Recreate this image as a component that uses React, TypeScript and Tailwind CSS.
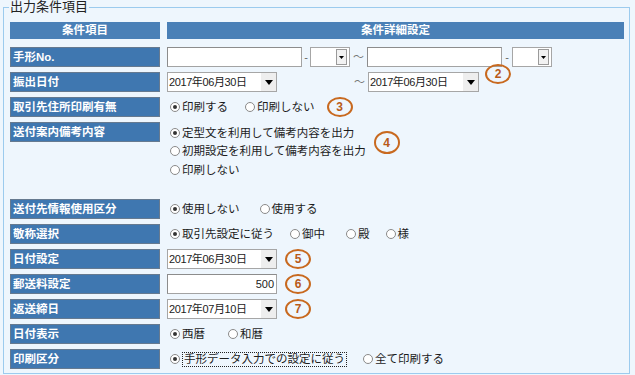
import React from "react";

const FONT = "font-['Liberation_Sans','Noto_Sans_CJK_JP',sans-serif]";

const Arrow = ({ small = false }: { small?: boolean }) =>
  small ? (
    <svg width="5" height="3" viewBox="0 0 5 3">
      <path d="M0 0H5L2.5 3z" fill="#000" />
    </svg>
  ) : (
    <svg width="8" height="5" viewBox="0 0 8 5">
      <path d="M0 0H8L4 5z" fill="#000" />
    </svg>
  );

const Label = ({ children }: { children: React.ReactNode }) => (
  <div className="w-[150px] h-[20px] shrink-0 self-start bg-[#3f77b0] border border-[#667a90] pl-[2px] text-white font-bold text-[11.5px] leading-[18px]">
    {children}
  </div>
);

const TextBox = ({ value = "", w }: { value?: string; w: string }) => (
  <div
    className={`${w} h-[20px] border border-[#a3a3a3] border-t-[#8c8c8c] border-l-[#8c8c8c] bg-white text-right pr-[2px] text-[11px] leading-[18px]`}
  >
    {value}
  </div>
);

const DateSelect = ({ value, w }: { value: string; w: string }) => (
  <div className={`${w} h-[20px] border border-[#a6a6a6] bg-white flex items-center`}>
    <span className="flex-1 pl-[1px] text-[11px] tracking-[-0.4px] leading-[18px]">{value}</span>
    <span className="w-[15px] h-full bg-[#eeeeee] flex items-center justify-center">
      <Arrow />
    </span>
  </div>
);

const SmallSelect = () => (
  <div className="w-[40px] h-[20px] border border-[#a6a6a6] bg-white flex items-center justify-end pr-[2px]">
    <span className="w-[11px] h-[16px] border border-[#9a9a9a] bg-[#f2f2f2] flex items-center justify-center">
      <Arrow small />
    </span>
  </div>
);

const Radio = ({
  label,
  checked = false,
  className = "",
  focus = false,
}: {
  label: string;
  checked?: boolean;
  className?: string;
  focus?: boolean;
}) => (
  <span className={`inline-flex items-center ${className}`}>
    <span className="w-[10px] h-[10px] rounded-full border border-[#8a8a8a] bg-white flex items-center justify-center">
      {checked && <span className="w-[4px] h-[4px] rounded-full bg-[#333]" />}
    </span>
    <span
      className={`ml-[2px] ${focus ? "border border-dotted border-[#222] px-[1px] leading-[13px]" : "leading-[16px]"}`}
    >
      {label}
    </span>
  </span>
);

const Mark = ({ n, className = "" }: { n: number; className?: string }) => (
  <span
    className={`w-[26px] h-[20px] shrink-0 rounded-[50%] border-2 border-[#c8691f] text-[#b85a18] font-bold text-[12px] leading-none flex items-center justify-center ${className}`}
  >
    {n}
  </span>
);

const Row = ({
  label,
  children,
  top = "mt-[5px]",
}: {
  label: string;
  children: React.ReactNode;
  top?: string;
}) => (
  <div className={`flex gap-[7px] ${top}`}>
    <Label>{label}</Label>
    <div className="flex-1 flex items-center h-[20px] text-[11.5px]">{children}</div>
  </div>
);

const Dash = ({ w }: { w: string }) => (
  <span className={`${w} text-center text-[#666] text-[11px]`}>-</span>
);

export default function App() {
  return (
    <div className={`w-[635px] h-[375px] bg-[#eef6fd] pl-[3px] text-[#1c1c1c] ${FONT}`}>
      <fieldset className="w-[627px] h-[374px] border border-[#9ccbee] pl-[6px] pr-[4px]">
        <legend className="-ml-[1px] px-[1px] text-[13px] leading-[14px] text-[#222]">出力条件項目</legend>

        {/* header */}
        <div className="flex gap-[7px] mt-[8px] text-white font-bold text-[11.5px] leading-[17px] text-center">
          <div className="w-[150px] h-[17px] bg-[#4a80b7]">条件項目</div>
          <div className="w-[457px] h-[17px] bg-[#4a80b7]">条件詳細設定</div>
        </div>

        <Row label="手形No." top="mt-[8px]">
          <TextBox w="w-[135px]" />
          <Dash w="w-[8px]" />
          <SmallSelect />
          <span className="w-[17px] pl-[3px] text-[#777] text-[11px]">～</span>
          <TextBox w="w-[135px]" />
          <Dash w="w-[10px]" />
          <SmallSelect />
        </Row>

        <Row label="振出日付">
          <DateSelect value="2017年06月30日" w="w-[110px]" />
          <span className="w-[91px] flex justify-end pr-[3px] text-[#777] text-[11px]">～</span>
          <DateSelect value="2017年06月30日" w="w-[111px]" />
          <Mark n={2} className="ml-[6px] self-start -mt-[8px]" />
        </Row>

        <Row label="取引先住所印刷有無">
          <span className="pl-[3px]" />
          <Radio label="印刷する" checked />
          <Radio label="印刷しない" className="ml-[17px]" />
          <Mark n={3} className="ml-[12px]" />
        </Row>

        <div className="flex gap-[7px] mt-[5px] h-[72px]">
          <Label>送付案内備考内容</Label>
          <div className="flex text-[11.5px]">
            <div className="flex flex-col pl-[3px] pt-[2px]">
              <div className="h-[18px] flex items-center">
                <Radio label="定型文を利用して備考内容を出力" checked />
              </div>
              <div className="h-[18px] flex items-center">
                <Radio label="初期設定を利用して備考内容を出力" />
              </div>
              <div className="h-[19px] flex items-center">
                <Radio label="印刷しない" />
              </div>
            </div>
            <Mark n={4} className="ml-[8px] mt-[9px] h-[23px]" />
          </div>
        </div>

        <Row label="送付先情報使用区分">
          <span className="pl-[3px]" />
          <Radio label="使用しない" checked />
          <Radio label="使用する" className="ml-[20px]" />
        </Row>

        <Row label="敬称選択">
          <span className="pl-[3px]" />
          <Radio label="取引先設定に従う" checked />
          <Radio label="御中" className="ml-[16px]" />
          <Radio label="殿" className="ml-[21px]" />
          <Radio label="様" className="ml-[16px]" />
        </Row>

        <Row label="日付設定">
          <DateSelect value="2017年06月30日" w="w-[110px]" />
          <Mark n={5} className="ml-[8px]" />
        </Row>

        <Row label="郵送料設定">
          <TextBox value="500" w="w-[110px]" />
          <Mark n={6} className="ml-[8px]" />
        </Row>

        <Row label="返送締日">
          <DateSelect value="2017年07月10日" w="w-[110px]" />
          <Mark n={7} className="ml-[8px]" />
        </Row>

        <Row label="日付表示">
          <span className="pl-[3px]" />
          <Radio label="西暦" checked />
          <Radio label="和暦" className="ml-[23px]" />
        </Row>

        <Row label="印刷区分">
          <span className="pl-[3px]" />
          <Radio label="手形データ入力での設定に従う" checked focus />
          <Radio label="全て印刷する" className="ml-[16px]" />
        </Row>
      </fieldset>
    </div>
  );
}
